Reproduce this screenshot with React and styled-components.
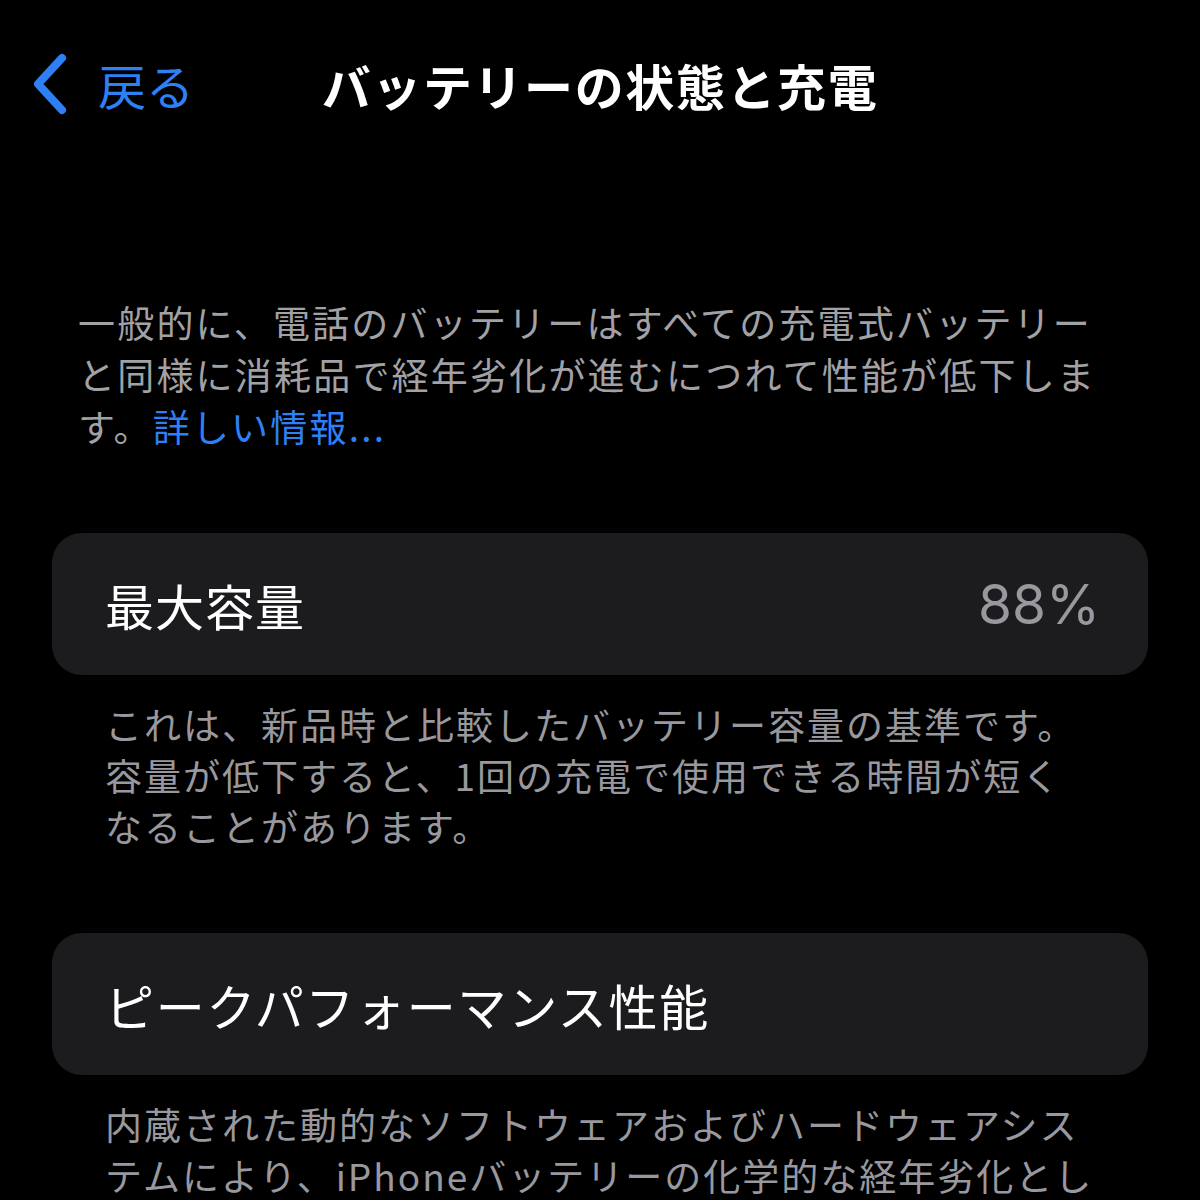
import React from 'react';
import styled, { createGlobalStyle } from 'styled-components';

const GlobalStyle = createGlobalStyle`
  html, body {
    margin: 0;
    padding: 0;
    background: #000;
  }
  body {
    font-family: "Noto Sans CJK JP", "Noto Sans", sans-serif;
    -webkit-font-smoothing: antialiased;
  }
`;

const Page = styled.div`
  width: 1200px;
  height: 1200px;
  background: #000;
  color: #fff;
  padding: 0 52px;
  box-sizing: border-box;
  overflow: hidden;
`;

const NavBar = styled.div`
  position: relative;
  height: 176px;
  padding-bottom: 8px;
  box-sizing: border-box;
  display: flex;
  align-items: center;
  justify-content: center;
`;

const BackButton = styled.div`
  position: absolute;
  left: -22px;
  top: 0;
  bottom: 8px;
  display: flex;
  align-items: center;
  gap: 28px;
  color: #2f7ff5;
  font-size: 48px;
`;

const Title = styled.h1`
  margin: 0;
  font-size: 49px;
  font-weight: 700;
  letter-spacing: 1.6px;
  color: #fff;
`;

const Description = styled.p`
  margin: 120px 0 0 26px;
  font-size: 37px;
  line-height: 52px;
  letter-spacing: 2.2px;
  color: #a1a1a6;
  white-space: nowrap;
`;

const Link = styled.span`
  color: #2f7ff5;
`;

const Card = styled.div`
  margin-top: ${p => p.$top}px;
  height: 142px;
  border-radius: 30px;
  background: #1c1c1e;
  display: flex;
  align-items: center;
  justify-content: space-between;
  padding: 0 48px 0 53px;
  box-sizing: border-box;
`;

const Label = styled.span`
  font-size: 49px;
  letter-spacing: ${p => p.$spacing || 0}px;
  color: #fff;
  white-space: nowrap;
`;

const Value = styled.span`
  font-family: Inter, "Noto Sans", sans-serif;
  font-size: 55px;
  font-weight: 400;
  color: #98989f;
`;

const Footnote = styled.p`
  margin: 24px 0 0 53px;
  font-size: 37px;
  line-height: 51px;
  letter-spacing: 2px;
  color: #98989e;
  white-space: nowrap;
`;

const Chevron = () => (
  <svg width="40" height="62" viewBox="0 0 40 62">
    <path
      d="M32 5 L8 31 L32 57"
      fill="none"
      stroke="#2f7ff5"
      strokeWidth="8"
      strokeLinecap="round"
      strokeLinejoin="round"
    />
  </svg>
);

export default function App() {
  return (
    <>
      <GlobalStyle />
      <Page>
        <NavBar>
          <BackButton>
            <Chevron />
            <span>戻る</span>
          </BackButton>
          <Title>バッテリーの状態と充電</Title>
        </NavBar>

        <Description>
          一般的に、電話のバッテリーはすべての充電式バッテリー<br />
          と同様に消耗品で経年劣化が進むにつれて性能が低下しま<br />
          す。<Link>詳しい情報...</Link>
        </Description>

        <Card $top={81}>
          <Label $spacing={1}>最大容量</Label>
          <Value>88%</Value>
        </Card>
        <Footnote>
          これは、新品時と比較したバッテリー容量の基準です。<br />
          容量が低下すると、1回の充電で使用できる時間が短く<br />
          なることがあります。
        </Footnote>

        <Card $top={81}>
          <Label $spacing={1.7}>ピークパフォーマンス性能</Label>
        </Card>
        <Footnote>
          内蔵された動的なソフトウェアおよびハードウェアシス<br />
          テムにより、iPhoneバッテリーの化学的な経年劣化とし
        </Footnote>
      </Page>
    </>
  );
}
